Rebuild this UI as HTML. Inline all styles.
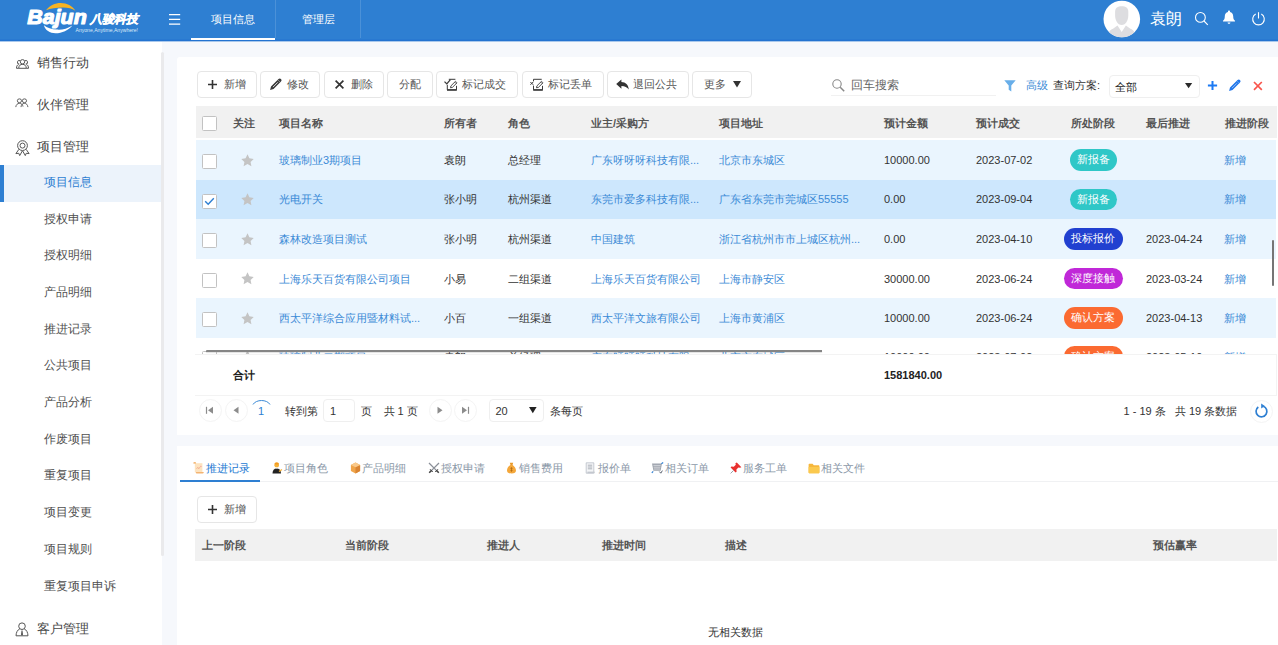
<!DOCTYPE html>
<html lang="zh">
<head>
<meta charset="utf-8">
<title>项目信息</title>
<style>
*{box-sizing:border-box;margin:0;padding:0}
html,body{width:1278px;height:645px;overflow:hidden;background:#f6f8fc}
body{font-family:"Liberation Sans",sans-serif;font-size:11px;color:#333;position:relative}
.abs{position:absolute}
/* header */
#hdr{position:absolute;left:0;top:0;width:1278px;height:42px;z-index:5;background:linear-gradient(#2e7fd2 0,#2e7fd2 39px,#2979d1 39px,#2979d1 40px,#2373d0 40px,#2373d0 41px,#a9c8ec 41px,#a9c8ec 42px)}
#hdr .tab{position:absolute;top:0;height:41px;line-height:39px;color:#fff;font-size:11px;text-align:center}
#hdr .sep{position:absolute;top:0;width:1px;height:38px;background:rgba(255,255,255,.14)}
/* sidebar */
#side{position:absolute;left:0;top:41px;width:162px;height:604px;background:#fff}
#side .m{position:absolute;left:37px;font-size:12.8px;color:#484848;line-height:16px;white-space:nowrap}
#side .s{position:absolute;left:44px;font-size:11.55px;color:#505050;line-height:14px;white-space:nowrap}
#side .ic{position:absolute;left:15px}
/* cards */
.card{position:absolute;left:177px;width:1101px;background:#fff;border-radius:3px 0 0 0}
.btn{position:absolute;top:71px;height:27px;border:1px solid #e6e6e6;border-radius:4px;background:#fff;font-size:11px;color:#555;line-height:25px;white-space:nowrap}
.btn span{position:absolute;top:0}
.th{position:absolute;font-weight:bold;font-size:11px;color:#545454;white-space:nowrap;line-height:14px}
.row{position:absolute;left:195px;width:1081px;height:40px}
.c{position:absolute;font-size:11px;line-height:14px;white-space:nowrap;color:#333}
.lk{color:#3b8ad6}
.cb{position:absolute;left:202px;width:15px;height:15px;border:1px solid #c2c2c2;border-radius:1.5px;background:#fff}
.badge{position:absolute;height:21.6px;border-radius:11px;color:#fff;font-size:11px;line-height:21.6px;text-align:center;width:48px}
.pc{position:absolute;width:23px;height:23px;border-radius:50%;border:1px solid #f4f4f4;background:#fff}
.t2{position:absolute;top:461px;font-size:11px;color:#8b98a8;line-height:14px;white-space:nowrap}
</style>
</head>
<body>
<!-- HEADER -->
<div id="hdr">
  <svg id="logo" class="abs" style="left:0;top:0" width="160" height="41" viewBox="0 0 160 41">
    <path d="M46 10.2C50 5.5 55 3 60.7 3 67 3 72.5 6 75.4 10.8 72 8.3 67.5 7.3 62.7 7.4 56.5 7.5 50.5 8.3 46 10.2z" fill="#f7b322"/>
    <path d="M43.9 25.2C45 30 50 33.2 55.5 33.2c6.5 0 13-3.2 16.9-7.8-4.9 3.2-10.4 4.6-15.4 4.2-5.5-.4-10-1.8-13.1-4.4z" fill="#fff"/>
    <text x="27.3" y="23.5" font-family="Liberation Sans, sans-serif" font-weight="bold" font-style="italic" font-size="21" fill="#fff" stroke="#fff" stroke-width="1.2" stroke-linejoin="round" textLength="59.5" lengthAdjust="spacingAndGlyphs">Bajun</text>
    <text x="90" y="22.6" font-family="Liberation Sans, sans-serif" font-weight="bold" font-style="italic" font-size="12" fill="#fff" stroke="#fff" stroke-width=".35" textLength="48.5" lengthAdjust="spacingAndGlyphs">八骏科技</text>
    <text x="75.5" y="31.7" font-family="Liberation Sans, sans-serif" font-size="5" fill="#dbe9f8" textLength="62.5" lengthAdjust="spacingAndGlyphs">Anyone,Anytime,Anywhere!</text>
  </svg>
  <svg class="abs" style="left:169px;top:14px" width="12" height="11" viewBox="0 0 12 11"><path d="M0 .7h11.2M0 5.4h11.2M0 10.1h11.2" stroke="#fff" stroke-width="1.3" fill="none"/></svg>
  <div class="tab" style="left:191px;width:84px">项目信息</div>
  <div class="abs" style="left:191px;top:38px;width:84px;height:2px;background:#fff"></div>
  <div class="sep" style="left:275px"></div>
  <div class="tab" style="left:276px;width:84px">管理层</div>
  <div class="sep" style="left:360px"></div>
  <div id="hright">
    <svg class="abs" style="left:1103px;top:0" width="38" height="38" viewBox="0 0 38 38">
      <defs><clipPath id="av"><circle cx="18.8" cy="19" r="18.3"/></clipPath></defs>
      <circle cx="18.8" cy="19" r="18.3" fill="#fff"/>
      <g clip-path="url(#av)" fill="#dddde0">
        <path d="M18.7 6.2c-4 0-6.6 1.6-6.6 5.5v4c0 4 2.5 9.3 6.6 9.3s6.6-5.3 6.6-9.3v-4c0-3.9-2.6-5.5-6.6-5.5z"/>
        <path d="M5 38c0-5 1.5-8 5-9.2l4.5-3.4 4.2 6.5 4.2-6.5 4.5 3.4c3.5 1.2 5 4.2 5 9.2z"/>
      </g>
    </svg>
    <div class="abs" style="left:1149.5px;top:9px;font-size:15.5px;line-height:20px;color:#fff;white-space:nowrap">袁朗</div>
    <svg class="abs" style="left:1194px;top:11px" width="15" height="15" viewBox="0 0 15 15"><circle cx="6.4" cy="6.4" r="4.9" stroke="#fff" stroke-width="1.1" fill="none"/><path d="M10 10l3.8 3.8" stroke="#fff" stroke-width="1.1"/></svg>
    <svg class="abs" style="left:1222px;top:10px" width="14" height="15" viewBox="0 0 14 15"><path d="M7 .6c.6 0 1 .4 1 1v.3c2 .5 3.2 2.2 3.2 4.4 0 2.6.7 3.6 1.8 4.5v.8H1v-.8c1.1-.9 1.8-1.9 1.8-4.5 0-2.2 1.2-3.9 3.2-4.4v-.3c0-.6.4-1 1-1zM5.6 12.4h2.8c0 .8-.6 1.4-1.4 1.4s-1.4-.6-1.4-1.4z" fill="#fff"/></svg>
    <svg class="abs" style="left:1251px;top:11px" width="15" height="15" viewBox="0 0 15 15"><path d="M4.7 3A5.8 5.8 0 1 0 10.3 3" stroke="#fff" stroke-width="1.1" fill="none"/><path d="M7.5 1.2v6.3" stroke="#fff" stroke-width="1.1"/></svg>
  </div>
</div>

<!-- SIDEBAR -->
<div id="side">
  <div class="abs" style="left:0;top:124px;width:162px;height:37px;background:#ecf3fb"></div>
  <div class="abs" style="left:0;top:124px;width:4px;height:37px;background:#2e7fd2"></div>
  <div class="abs" style="left:161px;top:11px;width:3px;height:504px;background:#eaeaec;border-radius:2px"></div>
  <svg class="ic" style="top:18px;left:16px" width="13" height="10" viewBox="0 0 13 10"><g fill="none" stroke="#555" stroke-width="1"><circle cx="6.5" cy="2.8" r="2.2"/><path d="M2.7 9.3c0-2.500 1.600-4 3.800-4s3.800 1.500 3.800 4z"/><path d="M4 1.700A1.75 1.75 0 1 0 3.300 5M2.7 5.600C1.200 5.900.5 7.100.5 9.3h2.200M9 1.700A1.75 1.75 0 1 1 9.700 5M10.3 5.600c1.500.3 2.200 1.500 2.200 3.700h-2.2"/></g></svg>
  <div class="m" style="top:14px">销售行动</div>
  <svg class="ic" style="top:57.3px;left:15.4px" width="13.5" height="10.4" viewBox="0 0 14 12" preserveAspectRatio="none"><g fill="none" stroke="#555" stroke-width="1"><circle cx="4.6" cy="3.2" r="2.2"/><circle cx="9.8" cy="3.2" r="2.2"/><path d="M.8 10.5c.3-2.7 1.7-4.3 3.8-4.3s3.3 1.4 3.7 3.7M6.2 10.5c.3-2.7 1.6-4.3 3.6-4.3s3.3 1.6 3.6 4.3"/></g></svg>
  <div class="m" style="top:56px">伙伴管理</div>
  <svg class="ic" style="top:98.8px;left:14.6px" width="15" height="16" viewBox="0 0 15 16"><g fill="none" stroke="#555" stroke-width="1"><circle cx="7.5" cy="5.6" r="4.9"/><circle cx="7.5" cy="5.6" r="2.5"/><path d="M3.900 9.300L.9 13.6l2.900-.3.900 2.300 2.600-4.600M11.1 9.300l3 4.300-2.900-.3-.9 2.300L7.700 11"/></g></svg>
  <div class="m" style="top:98px">项目管理</div>
  <svg class="ic" style="top:581px" width="14" height="15" viewBox="0 0 14 15"><g fill="none" stroke="#555" stroke-width="1"><circle cx="7" cy="4.2" r="3.3"/><path d="M4.8 6.8C2.4 8 1.2 10.3 1 13.8h12c-.2-3.5-1.4-5.8-3.8-7"/></g><path d="M6.5 8.6h1l.5 4.2-1 .9-1-.9z" fill="#555"/></svg>
  <div class="m" style="top:580px">客户管理</div>
  <div class="s" style="top:133.5px;color:#2e7fd2">项目信息</div>
  <div class="s" style="top:170.5px">授权申请</div>
  <div class="s" style="top:207px">授权明细</div>
  <div class="s" style="top:244px">产品明细</div>
  <div class="s" style="top:280.5px">推进记录</div>
  <div class="s" style="top:317px">公共项目</div>
  <div class="s" style="top:354px">产品分析</div>
  <div class="s" style="top:390.5px">作废项目</div>
  <div class="s" style="top:427px">重复项目</div>
  <div class="s" style="top:464px">项目变更</div>
  <div class="s" style="top:500.5px">项目规则</div>
  <div class="s" style="top:537.5px">重复项目申诉</div>
</div>

<!-- CARD 1 -->
<div class="card" style="top:57px;height:378px"></div>
<div id="main">
  <div class="btn" style="left:197px;width:60px"><svg class="abs" style="left:10px;top:8px" width="9" height="9" viewBox="0 0 9 9"><path d="M4.5 0v9M0 4.5h9" stroke="#333" stroke-width="1.6"/></svg><span style="left:26px">新增</span></div>
  <div class="btn" style="left:260px;width:60px"><svg class="abs" style="left:7.6px;top:5.4px" width="14" height="14" viewBox="0 0 14 14"><path d="M1.1 13l.9-3.4 7.5-7.5A1.75 1.75 0 0 1 12 4.6l-7.5 7.5z" fill="#3a3a3a"/><path d="M4 10.1l4.800-4.800" stroke="#fff" stroke-width=".8"/><path d="M8.800 2.900l2.400 2.400" stroke="#ddd" stroke-width=".5"/></svg><span style="left:26px">修改</span></div>
  <div class="btn" style="left:323.5px;width:60px"><svg class="abs" style="left:10px;top:8px" width="9" height="9" viewBox="0 0 9 9"><path d="M.6.6l7.8 7.8M8.4.6L.6 8.4" stroke="#333" stroke-width="1.7"/></svg><span style="left:26px">删除</span></div>
  <div class="btn" style="left:387px;width:45.5px"><span style="left:11px">分配</span></div>
  <div class="btn" style="left:436px;width:81.5px"><svg class="abs" style="left:7.4px;top:5.5px" width="14" height="13" viewBox="0 0 14 13"><g fill="none" stroke="#3a3a3a"><path d="M3.3 6.8v5h9.2V7.8M4.8 1.3h6.6" stroke-width="1"/><path d="M3 12h9.8" stroke-width="1.5"/><path d="M.5 3.6l2.3 2.3L6.4 1.6" stroke-width="1.3"/><path d="M6.5 9.8l.4-1.9 4.6-4.6 1.5 1.5-4.6 4.6z" fill="#fff" stroke-width=".9"/><path d="M10.7 4.1l1.5 1.5" stroke-width=".8"/></g></svg><span style="left:25.3px">标记成交</span></div>
  <div class="btn" style="left:522px;width:81.5px"><svg class="abs" style="left:7.4px;top:5.5px" width="14" height="13" viewBox="0 0 14 13"><g fill="none" stroke="#3a3a3a"><path d="M3.5 7.6v4.2h9V7.8M3.5 3.4V1.3h8.2" stroke-width="1"/><path d="M3.2 12h9.6" stroke-width="1.5"/><path d="M.4 4l2.8 2.8M3.2 4L.4 6.8" stroke-width="1"/><path d="M6.5 9.8l.4-1.9 4.6-4.6 1.5 1.5-4.6 4.6z" fill="#fff" stroke-width=".9"/><path d="M10.7 4.1l1.5 1.5" stroke-width=".8"/></g></svg><span style="left:25.3px">标记丢单</span></div>
  <div class="btn" style="left:607px;width:81.5px"><svg class="abs" style="left:7.6px;top:7px" width="13" height="11" viewBox="0 0 13 11"><path d="M5.4.4v2.7c4.3.3 6.9 2.6 7.4 7.5-1.7-2.6-3.9-3.7-7.4-3.7v2.8L.2 5z" fill="#333"/></svg><span style="left:25px">退回公共</span></div>
  <div class="btn" style="left:692px;width:60px"><span style="left:11px">更多</span><svg class="abs" style="left:40px;top:9px" width="8" height="7" viewBox="0 0 8 7"><path d="M0 0h8L4 6.5z" fill="#333"/></svg></div>
  <svg class="abs" style="left:832px;top:79px" width="13" height="13" viewBox="0 0 13 13"><circle cx="5" cy="5" r="4.2" stroke="#888" stroke-width="1.1" fill="none"/><path d="M8.2 8.2l4 4" stroke="#888" stroke-width="1.5"/></svg>
  <div class="abs" style="left:851px;top:77px;font-size:12.3px;line-height:16px;color:#666;white-space:nowrap">回车搜索</div>
  <div class="abs" style="left:831px;top:95px;width:165px;height:1px;background:#f1f1f1"></div>
  <svg class="abs" style="left:1004px;top:80px" width="12" height="12" viewBox="0 0 12 12"><path d="M.3.3h11.4L7.3 5.6v5.8L4.7 9.8V5.6z" fill="#68aee9"/></svg>
  <div class="abs lk" style="left:1026px;top:78px;font-size:11px;line-height:14px;white-space:nowrap">高级</div>
  <div class="abs" style="left:1053px;top:78px;font-size:11px;line-height:14px;white-space:nowrap;color:#333">查询方案:</div>
  <div class="abs" style="left:1108.5px;top:75px;width:91px;height:23px;border:1px solid #efefef;border-radius:4px;background:#fff"></div>
  <div class="abs" style="left:1115px;top:80px;font-size:11px;line-height:14px;color:#222;white-space:nowrap">全部</div>
  <svg class="abs" style="left:1185px;top:83.3px" width="8" height="6" viewBox="0 0 8 6"><path d="M0 0h7.2L3.6 5.3z" fill="#2a2a2a"/></svg>
  <svg class="abs" style="left:1206.5px;top:80.3px" width="11" height="11" viewBox="0 0 11 11"><path d="M5.5.9v9.2M.9 5.5h9.2" stroke="#1c7af3" stroke-width="2"/></svg>
  <svg class="abs" style="left:1227.6px;top:78.4px" width="14" height="14" viewBox="0 0 14 14"><path d="M1.1 13l.9-3.4 7.5-7.5A1.75 1.75 0 0 1 12 4.6l-7.5 7.5z" fill="#2378ea"/><path d="M4 10.1l4.800-4.800" stroke="#bcd6f8" stroke-width=".7"/><path d="M8.800 2.900l2.400 2.400" stroke="#9cc3f5" stroke-width=".5"/></svg>
  <svg class="abs" style="left:1253px;top:80.5px" width="10" height="10" viewBox="0 0 10 10"><path d="M1 1l7.8 7.8M8.8 1L1 8.8" stroke="#f9554c" stroke-width="1.7"/></svg>
  <div class="abs" style="left:195px;top:106px;width:1082px;height:32px;background:#f1f1f1"></div>
  <div class="cb" style="top:115.5px"></div>
  <div class="th" style="left:233px;top:116px">关注</div>
  <div class="th" style="left:279px;top:116px">项目名称</div>
  <div class="th" style="left:444px;top:116px">所有者</div>
  <div class="th" style="left:508px;top:116px">角色</div>
  <div class="th" style="left:591px;top:116px">业主/采购方</div>
  <div class="th" style="left:719px;top:116px">项目地址</div>
  <div class="th" style="left:884px;top:116px">预计金额</div>
  <div class="th" style="left:976px;top:116px">预计成交</div>
  <div class="th" style="left:1071px;top:116px">所处阶段</div>
  <div class="th" style="left:1146px;top:116px">最后推进</div>
  <div class="th" style="left:1224.5px;top:116px">推进阶段</div>
  <div class="abs" style="left:195px;top:140px;width:1081px;height:214.5px;overflow:hidden">
   <div class="abs" style="left:0;top:0px;width:1082px;height:39.6px;background:#eaf5fe"></div>
   <div class="cb" style="left:7px;top:13.9px"></div>
   <svg class="abs" style="left:46px;top:13.6px" width="13" height="13" viewBox="0 0 13 13"><path d="M6.5.3l1.9 4 4.3.6-3.1 3 .8 4.3-3.9-2.1-3.9 2.1.8-4.3-3.1-3 4.3-.6z" fill="#c4c4c4"/></svg>
   <div class="c lk" style="left:84px;top:12.8px">玻璃制业3期项目</div>
   <div class="c" style="left:249px;top:12.8px">袁朗</div>
   <div class="c" style="left:313px;top:12.8px">总经理</div>
   <div class="c lk" style="left:396px;top:12.8px">广东呀呀呀科技有限...</div>
   <div class="c lk" style="left:524px;top:12.8px">北京市东城区</div>
   <div class="c" style="left:689px;top:12.8px">10000.00</div>
   <div class="c" style="left:781px;top:12.8px">2023-07-02</div>
   <div class="badge" style="left:874.5px;top:9px;width:47px;background:#2fc7c7">新报备</div>
   <div class="c lk" style="left:1029px;top:12.8px">新增</div>
   <div class="abs" style="left:0;top:39.6px;width:1082px;height:39.6px;background:#cde7fd"></div>
   <div class="cb" style="left:7px;top:53.5px"><svg class="abs" style="left:1px;top:2px" width="11" height="9" viewBox="0 0 11 9"><path d="M1.2 4.3l3 3L9.8 1.3" stroke="#2e7fd2" stroke-width="1.4" fill="none"/></svg></div>
   <svg class="abs" style="left:46px;top:53.2px" width="13" height="13" viewBox="0 0 13 13"><path d="M6.5.3l1.9 4 4.3.6-3.1 3 .8 4.3-3.9-2.1-3.9 2.1.8-4.3-3.1-3 4.3-.6z" fill="#c4c4c4"/></svg>
   <div class="c lk" style="left:84px;top:52.4px">光电开关</div>
   <div class="c" style="left:249px;top:52.4px">张小明</div>
   <div class="c" style="left:313px;top:52.4px">杭州渠道</div>
   <div class="c lk" style="left:396px;top:52.4px">东莞市爱多科技有限...</div>
   <div class="c lk" style="left:524px;top:52.4px">广东省东莞市莞城区55555</div>
   <div class="c" style="left:689px;top:52.4px">0.00</div>
   <div class="c" style="left:781px;top:52.4px">2023-09-04</div>
   <div class="badge" style="left:874.5px;top:48.6px;width:47px;background:#2fc7c7">新报备</div>
   <div class="c lk" style="left:1029px;top:52.4px">新增</div>
   <div class="abs" style="left:0;top:79.2px;width:1082px;height:39.6px;background:#eaf5fe"></div>
   <div class="cb" style="left:7px;top:93.1px"></div>
   <svg class="abs" style="left:46px;top:92.8px" width="13" height="13" viewBox="0 0 13 13"><path d="M6.5.3l1.9 4 4.3.6-3.1 3 .8 4.3-3.9-2.1-3.9 2.1.8-4.3-3.1-3 4.3-.6z" fill="#c4c4c4"/></svg>
   <div class="c lk" style="left:84px;top:92px">森林改造项目测试</div>
   <div class="c" style="left:249px;top:92px">张小明</div>
   <div class="c" style="left:313px;top:92px">杭州渠道</div>
   <div class="c lk" style="left:396px;top:92px">中国建筑</div>
   <div class="c lk" style="left:524px;top:92px">浙江省杭州市市上城区杭州...</div>
   <div class="c" style="left:689px;top:92px">0.00</div>
   <div class="c" style="left:781px;top:92px">2023-04-10</div>
   <div class="badge" style="left:869px;top:88.2px;width:58.6px;background:#2140d0">投标报价</div>
   <div class="c" style="left:951px;top:92px">2023-04-24</div>
   <div class="c lk" style="left:1029px;top:92px">新增</div>
   <div class="abs" style="left:0;top:118.9px;width:1082px;height:39.6px;background:#fff"></div>
   <div class="cb" style="left:7px;top:132.7px"></div>
   <svg class="abs" style="left:46px;top:132.4px" width="13" height="13" viewBox="0 0 13 13"><path d="M6.5.3l1.9 4 4.3.6-3.1 3 .8 4.3-3.9-2.1-3.9 2.1.8-4.3-3.1-3 4.3-.6z" fill="#c4c4c4"/></svg>
   <div class="c lk" style="left:84px;top:131.6px">上海乐天百货有限公司项目</div>
   <div class="c" style="left:249px;top:131.6px">小易</div>
   <div class="c" style="left:313px;top:131.6px">二组渠道</div>
   <div class="c lk" style="left:396px;top:131.6px">上海乐天百货有限公司</div>
   <div class="c lk" style="left:524px;top:131.6px">上海市静安区</div>
   <div class="c" style="left:689px;top:131.6px">30000.00</div>
   <div class="c" style="left:781px;top:131.6px">2023-06-24</div>
   <div class="badge" style="left:869px;top:127.8px;width:58.6px;background:#c028d8">深度接触</div>
   <div class="c" style="left:951px;top:131.6px">2023-03-24</div>
   <div class="c lk" style="left:1029px;top:131.6px">新增</div>
   <div class="abs" style="left:0;top:158.4px;width:1082px;height:39.6px;background:#eaf5fe"></div>
   <div class="cb" style="left:7px;top:172.3px"></div>
   <svg class="abs" style="left:46px;top:172px" width="13" height="13" viewBox="0 0 13 13"><path d="M6.5.3l1.9 4 4.3.6-3.1 3 .8 4.3-3.9-2.1-3.9 2.1.8-4.3-3.1-3 4.3-.6z" fill="#c4c4c4"/></svg>
   <div class="c lk" style="left:84px;top:171.2px">西太平洋综合应用暨材料试...</div>
   <div class="c" style="left:249px;top:171.2px">小百</div>
   <div class="c" style="left:313px;top:171.2px">一组渠道</div>
   <div class="c lk" style="left:396px;top:171.2px">西太平洋文旅有限公司</div>
   <div class="c lk" style="left:524px;top:171.2px">上海市黄浦区</div>
   <div class="c" style="left:689px;top:171.2px">10000.00</div>
   <div class="c" style="left:781px;top:171.2px">2023-06-24</div>
   <div class="badge" style="left:869px;top:167.4px;width:58.6px;background:#fb6a31">确认方案</div>
   <div class="c" style="left:951px;top:171.2px">2023-04-13</div>
   <div class="c lk" style="left:1029px;top:171.2px">新增</div>
   <div class="abs" style="left:0;top:198.1px;width:1082px;height:39.6px;background:#fff"></div>
   <div class="cb" style="left:7px;top:210.6px"></div>
   <svg class="abs" style="left:46px;top:210.3px" width="13" height="13" viewBox="0 0 13 13"><path d="M6.5.3l1.9 4 4.3.6-3.1 3 .8 4.3-3.9-2.1-3.9 2.1.8-4.3-3.1-3 4.3-.6z" fill="#c4c4c4"/></svg>
   <div class="c lk" style="left:84px;top:209.5px">玻璃制业二期项目</div>
   <div class="c" style="left:249px;top:209.5px">袁朗</div>
   <div class="c" style="left:313px;top:209.5px">总经理</div>
   <div class="c lk" style="left:396px;top:209.5px">广东呀呀呀科技有限...</div>
   <div class="c lk" style="left:524px;top:209.5px">北京市东城区</div>
   <div class="c" style="left:689px;top:209.5px">10000.00</div>
   <div class="c" style="left:781px;top:209.5px">2023-07-02</div>
   <div class="badge" style="left:869px;top:205.7px;width:58.6px;background:#fb6a31">确认方案</div>
   <div class="c" style="left:951px;top:209.5px">2023-05-10</div>
   <div class="c lk" style="left:1029px;top:209.5px">新增</div>
   <div class="abs" style="left:11px;top:210.3px;width:616px;height:1.7px;background:#858585;border-radius:1px 0 0 0;box-shadow:0 1px 1px rgba(0,0,0,.12)"></div>
  </div>
  <div class="abs" style="left:195px;top:106px;width:1px;height:248px;background:#fff"></div>
  <div class="abs" style="left:1272px;top:240px;width:2px;height:46px;background:#757575;border-radius:1px"></div>
  <div class="abs" style="left:195px;top:354px;width:1082px;height:41.5px;background:#fff;border:1px solid #f3f3f3;border-left:0"></div>
  <div class="th" style="left:233px;top:367.8px;color:#222">合计</div>
  <div class="th" style="left:884px;top:367.8px;color:#222">1581840.00</div>
  <div class="pc" style="left:199px;top:398.5px"><svg class="abs" style="left:5px;top:6px" width="10" height="9" viewBox="0 0 10 9"><path d="M1.5.8v7" stroke="#8c8c8c" stroke-width="1.2"/><path d="M8 .8L3 4.3l5 3.5z" fill="#8c8c8c"/></svg></div>
  <div class="pc" style="left:224.5px;top:398.5px"><svg class="abs" style="left:5px;top:6px" width="10" height="9" viewBox="0 0 10 9"><path d="M7.5.8L2.5 4.3l5 3.5z" fill="#8c8c8c"/></svg></div>
  <svg class="abs" style="left:252px;top:398px" width="19" height="8" viewBox="0 0 19 8"><path d="M1 6.5C4 1.2 15 1.2 18 6.5" stroke="#3b8ad6" stroke-width="1" fill="none"/></svg>
  <div class="abs" style="left:258px;top:403.5px;font-size:11px;line-height:14px;color:#2e7fd2">1</div>
  <div class="c" style="left:284.5px;top:403.5px">转到第</div>
  <div class="abs" style="left:323px;top:399px;width:32px;height:23px;border:1px solid #efefef;border-radius:4px;background:#fff"></div>
  <div class="c" style="left:330px;top:403.5px">1</div>
  <div class="c" style="left:361px;top:403.5px">页</div>
  <div class="c" style="left:383.5px;top:403.5px">共 1 页</div>
  <div class="pc" style="left:428.5px;top:398.5px"><svg class="abs" style="left:5px;top:6px" width="10" height="9" viewBox="0 0 10 9"><path d="M2.5.8l5 3.5-5 3.5z" fill="#8c8c8c"/></svg></div>
  <div class="pc" style="left:453.5px;top:398.5px"><svg class="abs" style="left:5px;top:6px" width="10" height="9" viewBox="0 0 10 9"><path d="M8.5.8v7" stroke="#8c8c8c" stroke-width="1.2"/><path d="M2 .8l5 3.5-5 3.5z" fill="#8c8c8c"/></svg></div>
  <div class="abs" style="left:489px;top:399px;width:54.5px;height:23px;border:1px solid #efefef;border-radius:4px;background:#fff"></div>
  <div class="c" style="left:495.5px;top:403.5px">20</div>
  <svg class="abs" style="left:528.5px;top:407px" width="8" height="7" viewBox="0 0 8 7"><path d="M0 0h7.6L3.8 6.2z" fill="#222"/></svg>
  <div class="c" style="left:549.5px;top:403.5px">条每页</div>
  <div class="c" style="left:1123.5px;top:403.5px">1 - 19 条&nbsp;&nbsp; 共 19 条数据</div>
  <div class="pc" style="left:1250px;top:400px"></div>
  <svg class="abs" style="left:1254px;top:403px" width="15" height="16" viewBox="0 0 15 16"><path d="M9.3 3.3A5.4 5.4 0 1 1 4.3 4" stroke="#2e7fd2" stroke-width="1.7" fill="none"/><path d="M7.2.6l3.6 2.5-3.6 2.5z" fill="#2e7fd2"/></svg>
</div>

<!-- CARD 2 -->
<div class="card" style="top:446px;height:199px;border-radius:0"></div>
<div id="lower">
  <div class="abs" style="left:180px;top:481px;width:1098px;height:1px;background:#f0f1f3"></div>
  <div class="abs" style="left:180px;top:480px;width:80px;height:2px;background:#2e7fd2"></div>
  <svg class="abs" style="left:192.5px;top:462px" width="11" height="12" viewBox="0 0 11 12"><path d="M1.8 1.2h7.6v9H1.8z" fill="#fde3bf"/><path d="M.3.9c0-.5.4-.7.9-.7h1.6v1.4H.9C.5 1.6.3 1.3.3.9z" fill="#f0a24c"/><path d="M2.8 9.9h7.9v.7c0 .5-.4.9-.9.9H3.7c-.5 0-.9-.4-.9-.9z" fill="#f4b472"/><path d="M3.6 6.8l1.2-1.4 1 1.3 1.2-1.6" stroke="#ec9a80" stroke-width=".7" fill="none"/><circle cx="7.9" cy="4.3" r=".6" fill="#f08a9a"/></svg>
  <div class="t2" style="left:205.7px;color:#2579d2">推进记录</div>
  <svg class="abs" style="left:271.5px;top:462.3px" width="11" height="12" viewBox="0 0 11 12"><circle cx="4.7" cy="3.2" r="2.3" fill="#f6b33a"/><path d="M2.3 2.6c.2-1.5 1.2-2.3 2.4-2.3s2.2.8 2.4 2.3z" fill="#f39a1e"/><path d="M.5 11.4c0-2.9 1.6-4.9 4.2-4.9 2.2 0 3.6 1.2 4.1 3.3l.2 1.6z" fill="#222"/><path d="M6.6 9l3-2.1.8 1-3 2.1z" fill="#f6b33a"/><path d="M4.1 5.4h1.2l-.6 1.3z" fill="#fff"/></svg>
  <div class="t2" style="left:284px">项目角色</div>
  <svg class="abs" style="left:349.5px;top:462px" width="11" height="12" viewBox="0 0 11 12"><path d="M5.5.6l4.6 2.3v6.2l-4.6 2.3L.9 9.1V2.9z" fill="#f0a54a"/><path d="M5.5 5.2l4.6-2.3v6.2l-4.6 2.3z" fill="#d98432"/><path d="M.9 2.9l4.6 2.3L10.1 2.9 5.5.6z" fill="#f9c98a"/></svg>
  <div class="t2" style="left:362px">产品明细</div>
  <svg class="abs" style="left:427.5px;top:462px" width="12" height="12" viewBox="0 0 12 12"><path d="M1 1l7.6 7.6M11 1L3.4 8.6" stroke="#8a8f98" stroke-width="1.3"/><path d="M1.2 10.8l2.4-2.4M10.8 10.8L8.4 8.4" stroke="#444" stroke-width="1.5"/><path d="M2 7.2l2.8 2.8M10 7.2L7.2 10" stroke="#444" stroke-width="1"/></svg>
  <div class="t2" style="left:440.7px">授权申请</div>
  <svg class="abs" style="left:506px;top:462px" width="11" height="12" viewBox="0 0 11 12"><path d="M3.8.8h3.4L6.5 3h-2z" fill="#e89a2c"/><path d="M4.4 3h2.2c2 1.4 3.4 3.4 3.4 5.4 0 2-1.5 3-4.5 3S1 10.4 1 8.4c0-2 1.4-4 3.4-5.4z" fill="#f4a73a"/><path d="M5.5 5.2v4.6M4.4 6.4h2.2M4.4 8.4h2.2" stroke="#b36b12" stroke-width=".8"/></svg>
  <div class="t2" style="left:519px">销售费用</div>
  <svg class="abs" style="left:584.5px;top:462px" width="11" height="12" viewBox="0 0 11 12"><path d="M1.2.8h7.6v10.4H1.2z" fill="#f4f5f7" stroke="#b9bec6" stroke-width=".8"/><path d="M2.8 3.2h4.4M2.8 5h4.4M2.8 6.8h4.4" stroke="#9aa0aa" stroke-width=".8"/><path d="M2.4 9.6h7.2v1.6H2.4z" fill="#c3c7ce"/></svg>
  <div class="t2" style="left:597.5px">报价单</div>
  <svg class="abs" style="left:651px;top:462px" width="13" height="12" viewBox="0 0 13 12"><path d="M1 1.6h10l-1.4 7.2H2.4z" fill="#9ea4ad"/><path d="M2.4 3.4h7.2M2.6 5.2h6.8M2.8 7h6.2" stroke="#e8eaee" stroke-width=".7"/><path d="M.8 10.8l1.4-1.4M10.4 1.8l1.8-1.2" stroke="#2e7fd2" stroke-width="1.2"/><path d="M8.4 9.6l1.4 1.6 1.6-2.6" stroke="#5a6270" stroke-width="1" fill="none"/></svg>
  <div class="t2" style="left:665px">相关订单</div>
  <svg class="abs" style="left:730px;top:462px" width="12" height="12" viewBox="0 0 12 12"><path d="M6.8.6l4.6 4.6-1.4.6-1.6-.4-2 2 .2 2.4-1 .8-5-5 .8-1 2.4.2 2-2-.4-1.6z" fill="#e8312f" transform="translate(0 0)"/><path d="M3.6 8.4L.6 11.4" stroke="#9aa0aa" stroke-width="1"/></svg>
  <div class="t2" style="left:743px">服务工单</div>
  <svg class="abs" style="left:808px;top:463px" width="12" height="11" viewBox="0 0 12 11"><path d="M.6 1.8c0-.6.4-1 1-1h3l1.2 1.4h4.6c.6 0 1 .4 1 1v6c0 .6-.4 1-1 1H1.6c-.6 0-1-.4-1-1z" fill="#f6b73c"/><path d="M.6 4h10.8v5.2c0 .6-.4 1-1 1H1.6c-.6 0-1-.4-1-1z" fill="#fbc94e"/></svg>
  <div class="t2" style="left:821px">相关文件</div>
  <div class="btn" style="left:197px;top:496px;width:60px;height:27px;color:#555"><svg class="abs" style="left:10px;top:8px" width="9" height="9" viewBox="0 0 9 9"><path d="M4.5 0v9M0 4.5h9" stroke="#333" stroke-width="1.6"/></svg><span style="left:26px">新增</span></div>
  <div class="abs" style="left:195px;top:529px;width:1082px;height:31.5px;background:#f1f1f1"></div>
  <div class="th" style="left:202px;top:538px">上一阶段</div>
  <div class="th" style="left:344.5px;top:538px">当前阶段</div>
  <div class="th" style="left:487px;top:538px">推进人</div>
  <div class="th" style="left:602px;top:538px">推进时间</div>
  <div class="th" style="left:725px;top:538px">描述</div>
  <div class="th" style="left:1153px;top:538px">预估赢率</div>
  <div class="c" style="left:708px;top:625px">无相关数据</div>
</div>
</body>
</html>
